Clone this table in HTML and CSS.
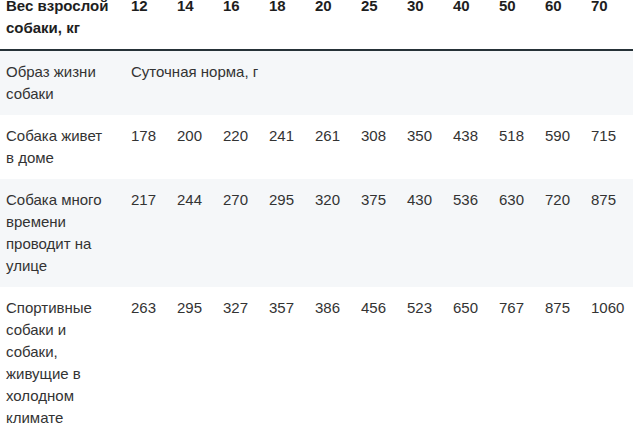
FILE: index.html
```html
<!DOCTYPE html>
<html lang="ru">
<head>
<meta charset="utf-8">
<link rel="stylesheet" href="styles.css">
</head>
<body>
<table class="feed">
  <colgroup>
    <col class="c-first">
    <col class="c-num"><col class="c-num"><col class="c-num"><col class="c-num"><col class="c-num">
    <col class="c-num"><col class="c-num"><col class="c-num"><col class="c-num"><col class="c-num">
    <col class="c-last">
  </colgroup>
  <thead>
    <tr>
      <th class="lead">Вес взрослой собаки, кг</th>
      <th>12</th><th>14</th><th>16</th><th>18</th><th>20</th><th>25</th><th>30</th><th>40</th><th>50</th><th>60</th><th>70</th>
    </tr>
  </thead>
  <tbody>
    <tr class="alt">
      <td class="lead">Образ жизни собаки</td>
      <td colspan="11">Суточная норма, г</td>
    </tr>
    <tr>
      <td class="lead">Собака живет в доме</td>
      <td>178</td><td>200</td><td>220</td><td>241</td><td>261</td><td>308</td><td>350</td><td>438</td><td>518</td><td>590</td><td>715</td>
    </tr>
    <tr class="alt">
      <td class="lead">Собака много времени проводит на улице</td>
      <td>217</td><td>244</td><td>270</td><td>295</td><td>320</td><td>375</td><td>430</td><td>536</td><td>630</td><td>720</td><td>875</td>
    </tr>
    <tr>
      <td class="lead">Спортивные собаки и собаки, живущие в холодном климате</td>
      <td>263</td><td>295</td><td>327</td><td>357</td><td>386</td><td>456</td><td>523</td><td>650</td><td>767</td><td>875</td><td>1060</td>
    </tr>
  </tbody>
</table>
</body>
</html>
```
FILE: styles.css
```css
html, body {
  margin: 0;
  padding: 0;
  background: #ffffff;
  overflow: hidden;
}
body {
  font-family: "Liberation Sans", Arial, sans-serif;
  font-size: 15px;
  line-height: 22px;
  color: #333333;
}
.feed {
  width: 633px;
  margin-top: -15px;
  border-collapse: collapse;
  border-spacing: 0;
  table-layout: fixed;
}
.c-first { width: 125px; }
.c-num { width: 46px; }
.c-last { width: 48px; }
.feed th,
.feed td {
  padding: 10px 6px;
  text-align: left;
  vertical-align: top;
}
.feed .lead {
  padding-right: 14px;
}
.feed th {
  font-weight: bold;
  color: #1e1e1e;
  border-bottom: 2px solid #263238;
}
.feed tr.alt td {
  background: #f5f7f9;
}
```
